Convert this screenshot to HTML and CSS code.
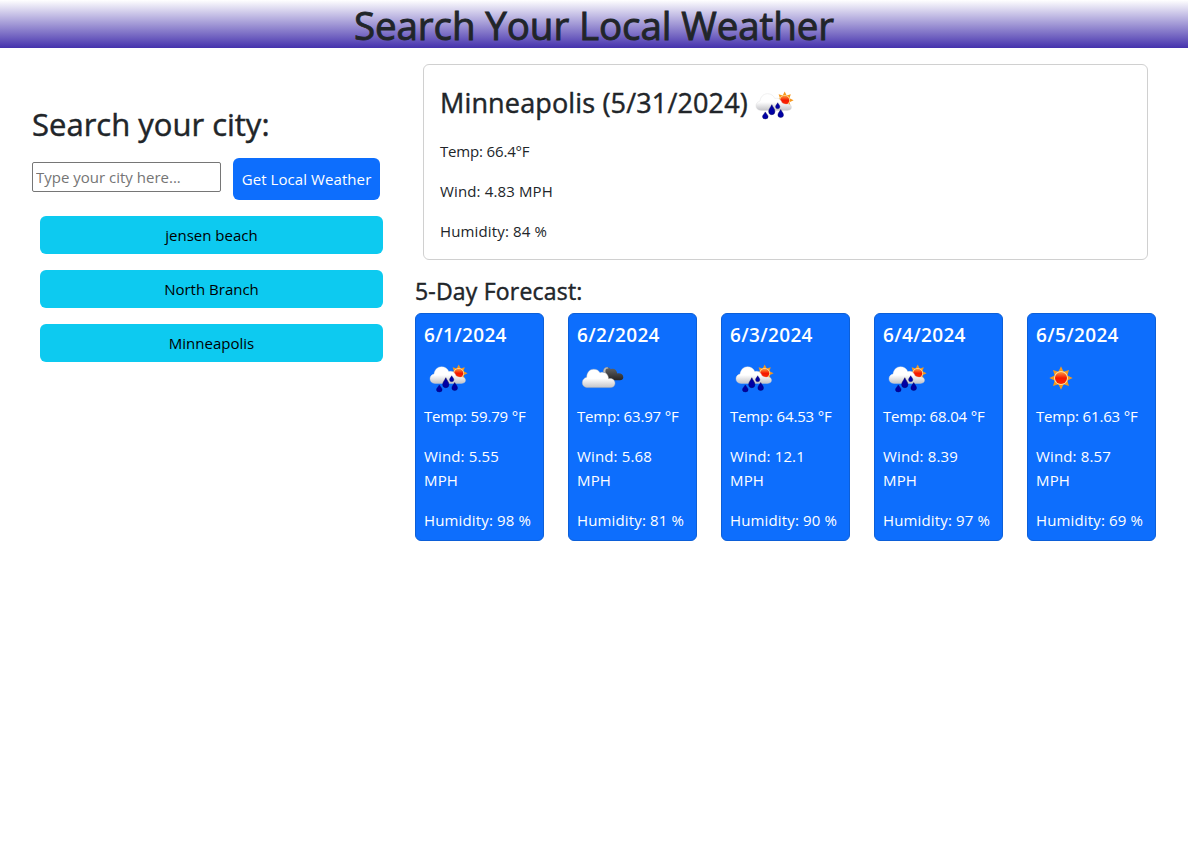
FILE: index.html
```html
<!DOCTYPE html>
<html lang="en">
<head>
<meta charset="utf-8">
<title>Weather Dashboard</title>
<link rel="stylesheet" href="styles.css">
</head>
<body>
<svg class="sprite" aria-hidden="true">
  <defs>
    <linearGradient id="cloudFill" x1="0" y1="0" x2="0" y2="1"><stop offset=".5" stop-color="#fff"/><stop offset="1" stop-color="#c4c4c8"/></linearGradient>
    <linearGradient id="darkFill" x1="0" y1="0" x2="0" y2="1"><stop offset="0" stop-color="#666"/><stop offset="1" stop-color="#242426"/></linearGradient>
    <linearGradient id="sunFill" x1="0" y1="0" x2="0" y2="1"><stop offset="0" stop-color="#ff9a3c"/><stop offset=".5" stop-color="#f31800"/><stop offset="1" stop-color="#ff2a00"/></linearGradient>
    <path id="drop" d="M0-5C1-2.5 3.1-.6 3.1 1.9A3.1 3.1 0 0 1-3.1 1.9C-3.1-.6-1-2.5 0-5Z" fill="#0000a4" stroke="#00005c" stroke-width=".5"/>
    <g id="sunShape">
      <path d="M0-11.700L2.600-6.300 8-8 6.300-2.600 11.700 0 6.300 2.600 8 8 2.600 6.300 0 11.700-2.600 6.300-8 8-6.300 2.600-11.700 0-6.300-2.600-8-8-2.600-6.300Z" fill="#f6981d"/>
      <circle r="7" fill="#ffdf9c"/><circle r="6" fill="url(#sunFill)"/>
    </g>
    <symbol id="rain" viewBox="0 0 50 50">
      <use href="#sunShape" transform="translate(34.700 20.300) scale(.76)"/>
      <path d="M11 30.400C7.800 30.400 6 28.400 6 25.800C6 23.300 7.700 21.600 10 21.100C10.500 16.800 13.500 13.700 17.500 13.700C21 13.700 23.600 15.600 24.800 18.500C28 17.500 31 19.200 32 22.800C33 23.700 34.600 24.100 36.300 24.300C38 23.500 41.500 24.300 41.500 27.100C41.500 29.300 40 30.400 37.500 30.400Z" fill="url(#cloudFill)" stroke="#d5d5d5" stroke-width=".35"/>
      <use href="#drop" transform="translate(15.300 35.400) scale(.9 .7)"/>
      <use href="#drop" x="21.800" y="29.700"/>
      <use href="#drop" transform="translate(27.700 25.700) scale(.7 .6)"/>
      <use href="#drop" transform="translate(30.700 33.500) scale(.9 .8)"/>
    </symbol>
    <symbol id="clouds" viewBox="0 0 50 50">
      <path d="M26.500 19C26 15.800 28 14.300 30.200 14.300C32 14.300 33 15 33.800 16.300C36.800 14.800 39.800 17 40.200 20.500C43.400 19.800 46.300 21.500 46.300 24.300C46.300 26.300 45 27.200 42.800 27.200H32Z" fill="url(#darkFill)"/>
      <path d="M26.300 19C26 15.800 28 14.200 30.500 14.300L31.500 15.500C29 15 27.700 17 28.800 20Z" fill="#bbb"/>
      <path d="M11 34.600C7.500 34.600 5.300 32.600 5.300 29.700C5.300 27 7 24.700 9.700 24.200C9.800 19.500 12.500 16.200 16.800 16.200C19.500 16.200 21.700 17.300 23 19.700C27.500 18 31.600 21.100 31.500 25.700C35.500 24.700 38 27.200 38 30.300C38 33.100 36 34.600 33 34.600Z" fill="url(#cloudFill)" stroke="#b4b4b4" stroke-width=".4"/>
    </symbol>
    <symbol id="sun" viewBox="0 0 50 50"><use href="#sunShape" x="25" y="25"/></symbol>
  </defs>
</svg>
<header class="banner"><h1>Search Your Local Weather</h1></header>
<main class="layout">
  <aside class="sidebar">
    <h2 class="search-title">Search your city:</h2>
    <form class="search">
      <input class="search-input" type="text" placeholder="Type your city here...">
      <button class="search-button" type="button">Get Local Weather</button>
    </form>
    <div class="history">
      <button class="city">jensen beach</button>
      <button class="city">North Branch</button>
      <button class="city">Minneapolis</button>
    </div>
  </aside>
  <section class="content">
    <article class="current">
      <h2 class="current-title"><span>Minneapolis (5/31/2024)</span><svg class="icon"><use href="#rain"/></svg></h2>
      <p class="temp">Temp: 66.4°F</p>
      <p>Wind: 4.83 MPH</p>
      <p>Humidity: 84 %</p>
    </article>
    <h3 class="forecast-title">5-Day Forecast:</h3>
    <div class="forecast">
      <article class="day"><h4>6/1/2024</h4><svg class="icon"><use href="#rain"/></svg><p class="temp">Temp: 59.79 °F</p><p>Wind: 5.55<br>MPH</p><p>Humidity: 98 %</p></article>
      <article class="day"><h4>6/2/2024</h4><svg class="icon"><use href="#clouds"/></svg><p class="temp">Temp: 63.97 °F</p><p>Wind: 5.68<br>MPH</p><p>Humidity: 81 %</p></article>
      <article class="day"><h4>6/3/2024</h4><svg class="icon"><use href="#rain"/></svg><p class="temp">Temp: 64.53 °F</p><p>Wind: 12.1<br>MPH</p><p>Humidity: 90 %</p></article>
      <article class="day"><h4>6/4/2024</h4><svg class="icon"><use href="#rain"/></svg><p class="temp">Temp: 68.04 °F</p><p>Wind: 8.39<br>MPH</p><p>Humidity: 97 %</p></article>
      <article class="day"><h4>6/5/2024</h4><svg class="icon"><use href="#sun"/></svg><p class="temp">Temp: 61.63 °F</p><p>Wind: 8.57<br>MPH</p><p>Humidity: 69 %</p></article>
    </div>
  </section>
</main>
</body>
</html>
```
FILE: styles.css
```css
* { box-sizing: border-box; }
body {
  margin: 0;
  background: #fff;
  color: #212529;
  font-family: "Open Sans", "Noto Sans", sans-serif;
  font-size: 15px;
  line-height: 24px;
}
h1, h2, h3, h4, p { margin: 0; font-weight: 500; }
h1, h2, h3 { -webkit-text-stroke: .45px currentColor; }
p { font-weight: 400; letter-spacing: .14px; white-space: nowrap; }
.temp { letter-spacing: -.17px; }
button, input { font: inherit; }
.sprite { display: block; width: 0; height: 0; }
.banner {
  height: 48px;
  background: linear-gradient(#fff, #4532ad);
  text-align: center;
}
.banner h1 { font-size: 38.5px; line-height: 51px; letter-spacing: -.08px; -webkit-text-stroke-width: .9px; }
.layout { display: grid; grid-template-columns: 351px 741px; gap: 32px; padding: 16px 32px 0; }
.sidebar { padding-top: 41px; }
.search-title { font-size: 31px; line-height: 38px; }
.search { display: flex; align-items: flex-start; gap: 12px; margin-top: 15px; }
.search-input {
  width: 189px;
  height: 30px;
  margin-top: 4px;
  padding: 1px 3px;
  border: 1px solid #767676;
  border-radius: 2px;
  background: #fff;
}
.search-input::placeholder { color: #757575; }
.search-button {
  width: 147px;
  height: 42px;
  padding: 0;
  border: 0;
  border-radius: 6px;
  background: #0d6efd;
  color: #fff;
  letter-spacing: .08px;
  white-space: nowrap;
}
.history { display: grid; gap: 16px; margin: 16px 0 0 8px; }
.city { height: 38px; padding: 0; border: 0; border-radius: 6px; background: #0dcaf0; color: #000; }
.current {
  height: 196px;
  margin: 0 8px;
  padding: 15px 16px;
  border: 1px solid #d0d0d0;
  border-radius: 6px;
}
.current-title { display: flex; align-items: center; height: 50px; margin-bottom: 9px; font-size: 27px; line-height: 34px; letter-spacing: .15px; }
.current-title span { width: 310px; padding-bottom: 4px; white-space: nowrap; }
.current p { margin-bottom: 16px; }
.icon { display: block; width: 50px; height: 50px; -webkit-text-stroke: 0; }
.forecast-title { margin-top: 16px; font-size: 23px; line-height: 30px; letter-spacing: .2px; }
.forecast { display: grid; grid-template-columns: repeat(5, 129px); gap: 24px; margin-top: 7px; }
.day {
  height: 228px;
  padding: 9px 8px;
  border: 1px solid #0c5fd8;
  border-radius: 6px;
  background: #0d6efd;
  color: #fff;
}
.day h4 { font-size: 19px; font-weight: 600; line-height: 24px; letter-spacing: .35px; margin-bottom: 6px; }
.day .icon { margin-bottom: 1px; }
.day p { margin-bottom: 16px; }
```
